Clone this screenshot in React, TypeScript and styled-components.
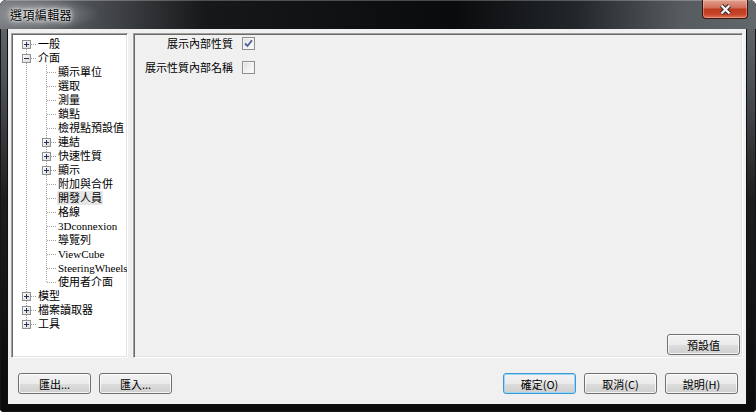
import React, { FC } from 'react';
import styled, { createGlobalStyle, css } from 'styled-components';

const GlobalStyle = createGlobalStyle`
  html, body {
    margin: 0;
    padding: 0;
    background: #ffffff;
  }
  body {
    font-family: "Noto Sans CJK TC", "Liberation Sans", sans-serif;
    font-size: 11px;
  }
`;

const sunken = css`
  border-style: solid;
  border-width: 1px;
  border-color: #a0a0a0 #ffffff #ffffff #a0a0a0;
  box-shadow: inset 1px 1px 0 #696969, inset -1px -1px 0 #e3e3e3;
`;

const Window = styled.div`
  width: 756px;
  height: 412px;
  box-sizing: border-box;
  display: flex;
  flex-direction: column;
  border-radius: 6px 6px 4px 4px;
  overflow: hidden;
  background: linear-gradient(to bottom, #6a6e72 0px, #4a4d50 90px, #1c1d1f 200px, #0b0b0c 100%);
  box-shadow: inset 0 0 0 1px #141516;
`;

const TitleBar = styled.div`
  height: 29px;
  flex: none;
  display: flex;
  align-items: flex-start;
  justify-content: space-between;
  padding-left: 8px;
  border-radius: 6px 6px 0 0;
  box-shadow: inset 0 1px 0 rgba(255, 255, 255, 0.25);
  background:
    radial-gradient(ellipse 60px 16px at 40px 14px, rgba(205, 208, 211, 0.55) 0%, rgba(170, 174, 178, 0.25) 60%, rgba(0, 0, 0, 0) 100%),
    linear-gradient(
      to right,
      #797d81 0%,
      #4c4f52 12%,
      #16181a 27%,
      #0a0b0d 60%,
      #22262a 76%,
      #565b5f 90%,
      #62676b 100%
    );
`;

const Title = styled.span`
  margin-top: 7px;
  padding: 0 2px;
  font-size: 12px;
  line-height: 15px;
  letter-spacing: 0.4px;
  color: #000;
  text-shadow: 0 0 8px rgba(255, 255, 255, 0.85), 0 0 4px rgba(255, 255, 255, 0.9), 0 0 2px rgba(255, 255, 255, 0.9);
`;

const CloseButton = styled.div`
  width: 46px;
  height: 19px;
  margin-right: 8px;
  box-sizing: border-box;
  display: flex;
  align-items: center;
  justify-content: center;
  border: 1px solid #3d150d;
  border-top: none;
  border-radius: 0 0 4px 4px;
  background: linear-gradient(to bottom, #e2a08f 0%, #d0705a 42%, #bd3a1f 52%, #c8442a 80%, #e0775a 100%);
  box-shadow: inset 0 0 0 1px rgba(255, 220, 210, 0.35);
`;

const Client = styled.div`
  flex: 1;
  display: flex;
  flex-direction: column;
  margin: 0 9px 7px 7px;
  padding: 4px 3px 10px 0;
  background: #f0f0f0;
  border: 1px solid #101010;
  border-top: none;
  box-sizing: border-box;
`;

const Main = styled.div`
  display: flex;
  gap: 5px;
  height: 325px;
  padding-left: 3px;
`;

const TreePanel = styled.div`
  ${sunken};
  width: 117px;
  box-sizing: border-box;
  background: #ffffff;
  padding: 3px 0 0 4px;
  overflow: hidden;
`;

const TreeRow = styled.div`
  display: flex;
  align-items: center;
  height: 14px;
`;

const GuideCell = styled.svg`
  display: block;
  flex: none;
  width: 20px;
  height: 14px;
`;

const NodeLabel = styled.span<{ $hot?: boolean }>`
  margin-left: 1px;
  padding: 0 1px;
  font-family: "Liberation Serif", "Noto Sans CJK TC", serif;
  font-size: 11px;
  line-height: 14px;
  white-space: nowrap;
  color: #000;
  background: ${(p) => (p.$hot ? '#e6e6e6' : 'transparent')};
`;

const PropPanel = styled.div`
  ${sunken};
  flex: 1;
  box-sizing: border-box;
  display: flex;
  flex-direction: column;
  padding: 2px 2px 2px 11px;
  background: #f0f0f0;
`;

const PropGrid = styled.div`
  display: grid;
  grid-template-columns: max-content 13px;
  grid-auto-rows: 14px;
  column-gap: 9px;
  row-gap: 10px;
  align-items: center;
`;

const PropLabel = styled.span`
  justify-self: end;
  font-size: 11px;
  line-height: 14px;
  white-space: nowrap;
  color: #000;
`;

const CheckBox = styled.span`
  width: 13px;
  height: 13px;
  box-sizing: border-box;
  display: flex;
  align-items: center;
  justify-content: center;
  border: 1px solid #8e8f8f;
  background: linear-gradient(135deg, #dcdcdc 0%, #f0f0f0 50%, #fcfcfc 100%);
  box-shadow: inset 0 0 0 1px #f4f4f4;
`;

const Button = styled.div<{ $default?: boolean }>`
  width: 73px;
  height: 21px;
  box-sizing: border-box;
  display: flex;
  align-items: center;
  justify-content: center;
  border: 1px solid ${(p) => (p.$default ? '#3c98d4' : '#707070')};
  border-radius: 3px;
  background: linear-gradient(to bottom, #f2f2f2 0%, #ebebeb 50%, #dddddd 51%, #cfcfcf 100%);
  box-shadow: ${(p) =>
    p.$default ? 'inset 0 0 0 1px #9ad8f5' : 'inset 0 0 0 1px rgba(255, 255, 255, 0.75)'};
  font-family: "Noto Sans CJK TC", "Liberation Sans", sans-serif;
  font-size: 11px;
  line-height: 14px;
  color: #000;
  flex: none;
`;

const DefaultsButton = styled(Button)`
  margin-top: auto;
  align-self: flex-end;
`;

const Footer = styled.div`
  display: flex;
  justify-content: space-between;
  padding: 15px 5px 0 10px;
`;

const ButtonGroup = styled.div`
  display: flex;
  gap: 8px;
`;

type Guide = 'none' | 'line' | 'tee' | 'elbow' | 'first';
type Box = 'plus' | 'minus' | undefined;

type TreeNode = {
  label: string;
  guides: Guide[];
  box?: Box;
  hot?: boolean;
};

const DOT = '#a0a0a0';

const GuideIcon: FC<{ kind: Guide; box?: Box }> = ({ kind, box }) => (
  <GuideCell viewBox="0 0 20 14">
    {(kind === 'line' || kind === 'tee') && (
      <line x1="10.5" y1="0" x2="10.5" y2="14" stroke={DOT} strokeDasharray="1 1" />
    )}
    {kind === 'elbow' && (
      <line x1="10.5" y1="0" x2="10.5" y2="8" stroke={DOT} strokeDasharray="1 1" />
    )}
    {kind === 'first' && (
      <line x1="10.5" y1="8" x2="10.5" y2="14" stroke={DOT} strokeDasharray="1 1" />
    )}
    {kind !== 'line' && kind !== 'none' && (
      <line x1={box ? 15 : 11} y1="7.5" x2="20" y2="7.5" stroke={DOT} strokeDasharray="1 1" />
    )}
    {box && (
      <>
        <defs>
          <linearGradient id="boxfill" x1="0" y1="0" x2="1" y2="1">
            <stop offset="0" stopColor="#ffffff" />
            <stop offset="1" stopColor="#d8d8d8" />
          </linearGradient>
        </defs>
        <rect x="6.5" y="3.5" width="8" height="8" fill="url(#boxfill)" stroke="#919191" />
        <line x1="8" y1="7.5" x2="13" y2="7.5" stroke="#23305a" />
        {box === 'plus' && <line x1="10.5" y1="5" x2="10.5" y2="10" stroke="#23305a" />}
      </>
    )}
  </GuideCell>
);

const mid = (label: string, box?: Box, hot?: boolean): TreeNode => ({
  label,
  guides: ['line', 'tee'],
  box,
  hot,
});

const tree: TreeNode[] = [
  { label: '一般', guides: ['first'], box: 'plus' },
  { label: '介面', guides: ['tee'], box: 'minus' },
  mid('顯示單位'),
  mid('選取'),
  mid('測量'),
  mid('鎖點'),
  mid('檢視點預設值'),
  mid('連結', 'plus'),
  mid('快速性質', 'plus'),
  mid('顯示', 'plus'),
  mid('附加與合併'),
  mid('開發人員', undefined, true),
  mid('格線'),
  mid('3Dconnexion'),
  mid('導覽列'),
  mid('ViewCube'),
  mid('SteeringWheels'),
  { label: '使用者介面', guides: ['line', 'elbow'] },
  { label: '模型', guides: ['tee'], box: 'plus' },
  { label: '檔案讀取器', guides: ['tee'], box: 'plus' },
  { label: '工具', guides: ['elbow'], box: 'plus' },
];

const props = [
  { label: '展示內部性質', checked: true },
  { label: '展示性質內部名稱', checked: false },
];

const CloseGlyph: FC = () => (
  <svg width="13" height="11" viewBox="0 0 13 11">
    <path d="M2.5 1.5 L10.5 9.5 M10.5 1.5 L2.5 9.5" stroke="#3a2a28" strokeWidth="4.4" />
    <path d="M2.5 1.5 L10.5 9.5 M10.5 1.5 L2.5 9.5" stroke="#f4f4f4" strokeWidth="2.4" />
  </svg>
);

const CheckGlyph: FC = () => (
  <svg width="9" height="9" viewBox="0 0 9 9">
    <path d="M1 4.5 L3.5 7 L8 1.2" fill="none" stroke="#4a5f95" strokeWidth="1.8" />
  </svg>
);

const OptionsEditor: FC = () => (
  <>
    <GlobalStyle />
    <Window>
      <TitleBar>
        <Title>選項編輯器</Title>
        <CloseButton>
          <CloseGlyph />
        </CloseButton>
      </TitleBar>

      <Client>
        <Main>
          <TreePanel>
            {tree.map((node) => (
              <TreeRow key={node.label}>
                {node.guides.map((g, i) => (
                  <GuideIcon
                    key={i}
                    kind={g}
                    box={i === node.guides.length - 1 ? node.box : undefined}
                  />
                ))}
                <NodeLabel $hot={node.hot}>{node.label}</NodeLabel>
              </TreeRow>
            ))}
          </TreePanel>

          <PropPanel>
            <PropGrid>
              {props.map((p) => (
                <React.Fragment key={p.label}>
                  <PropLabel>{p.label}</PropLabel>
                  <CheckBox>{p.checked && <CheckGlyph />}</CheckBox>
                </React.Fragment>
              ))}
            </PropGrid>
            <DefaultsButton>預設值</DefaultsButton>
          </PropPanel>
        </Main>

        <Footer>
          <ButtonGroup>
            <Button>匯出...</Button>
            <Button>匯入...</Button>
          </ButtonGroup>
          <ButtonGroup>
            <Button $default>確定(O)</Button>
            <Button>取消(C)</Button>
            <Button>說明(H)</Button>
          </ButtonGroup>
        </Footer>
      </Client>
    </Window>
  </>
);

export default OptionsEditor;
